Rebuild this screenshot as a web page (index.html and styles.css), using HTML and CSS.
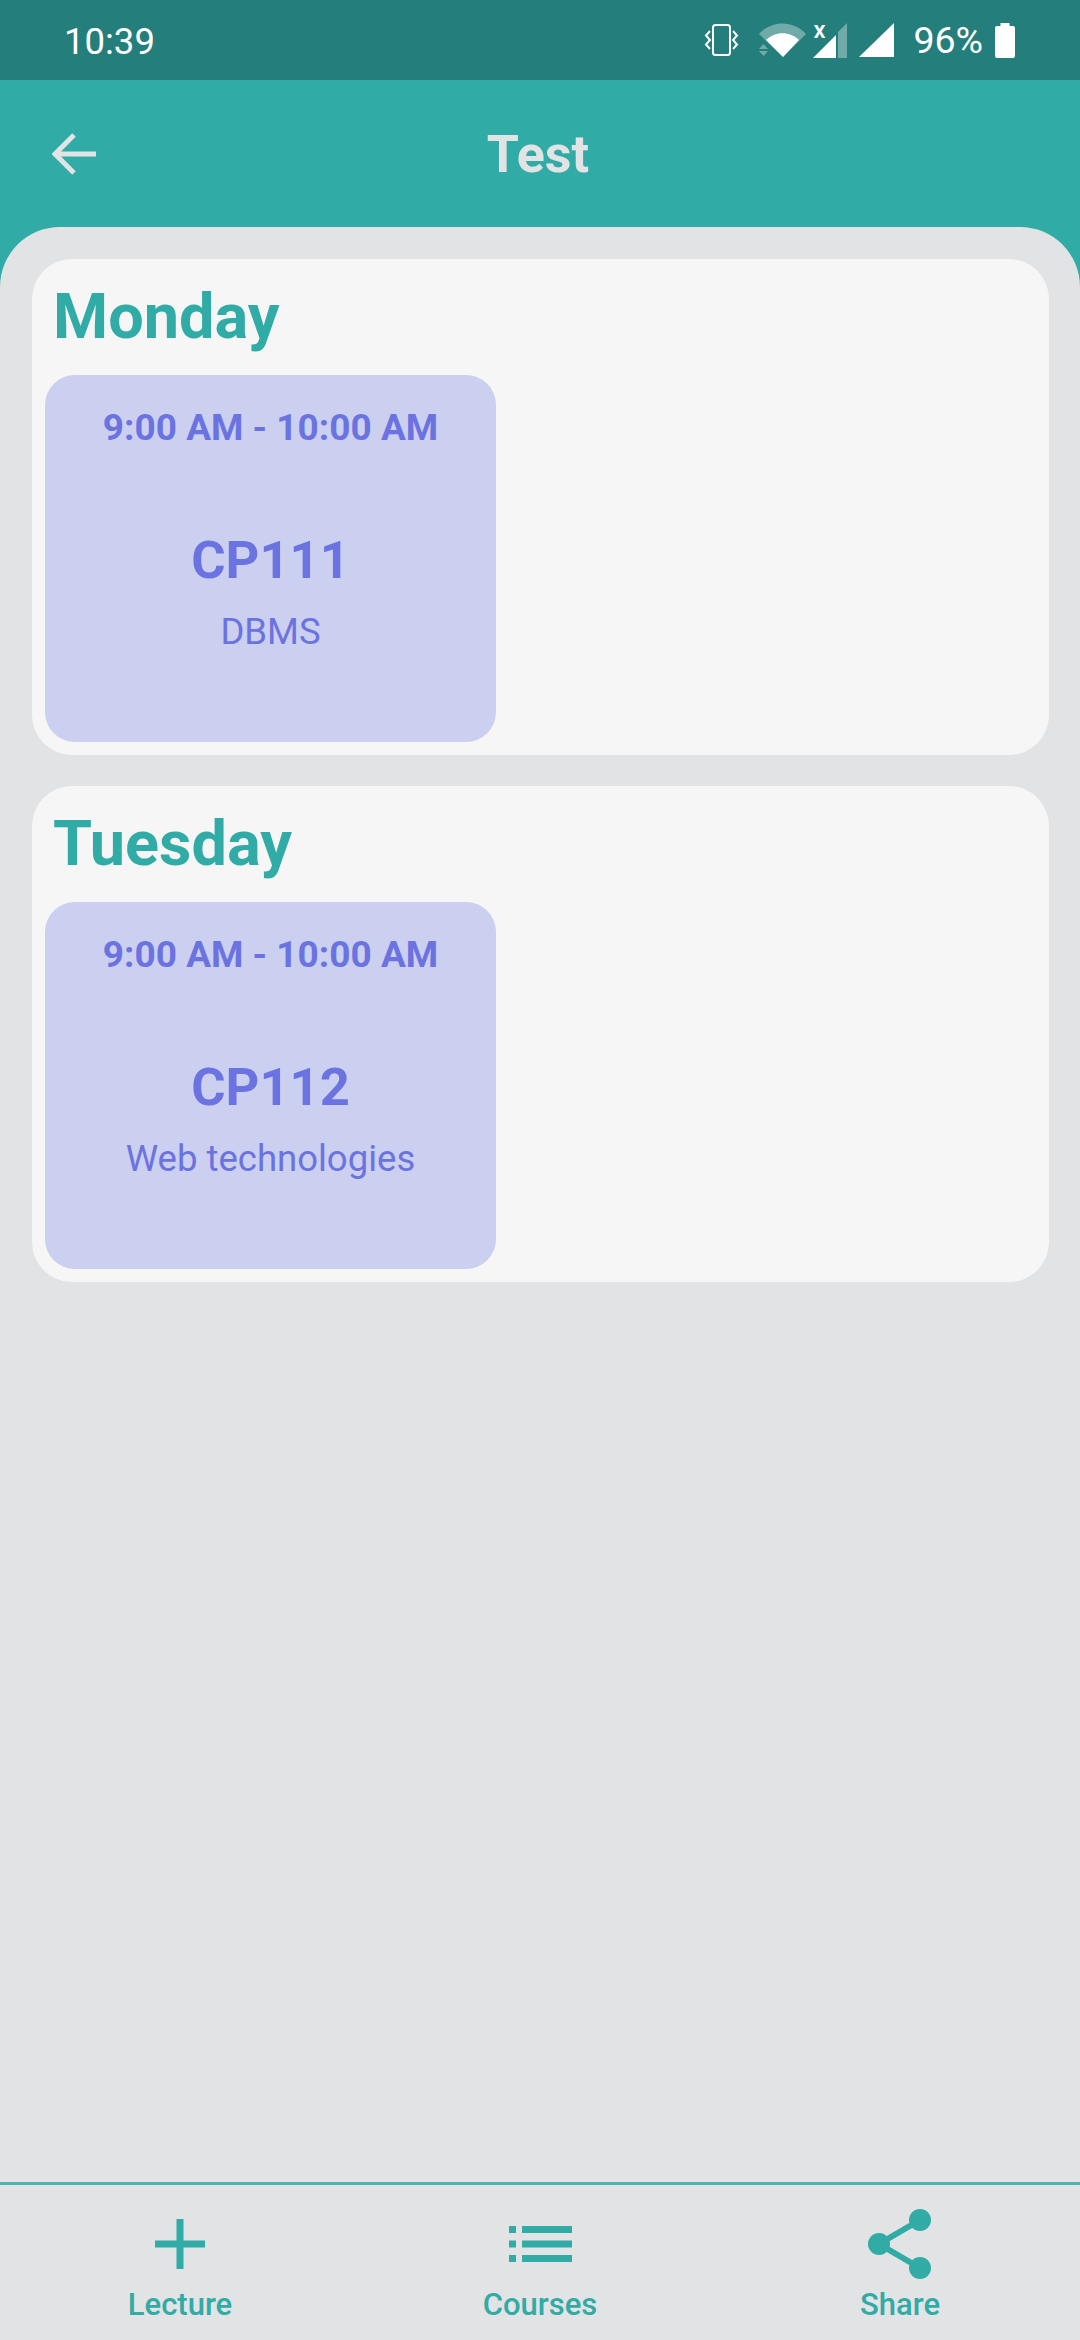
FILE: index.html
```html
<!DOCTYPE html>
<html lang="en">
	<head>
		<meta charset="UTF-8" />
		<meta name="viewport" content="width=device-width, initial-scale=1.0" />
		<title>Test</title>
		<link rel="stylesheet" href="styles.css">
	</head>
	<body>
		<div class="statusbar">
			<span class="clock">10:39</span>
			<div class="status-icons">
				<svg class="ic-vibrate" width="35" height="34" viewBox="0 0 35 34">
					<rect x="9" y="2" width="17" height="30" rx="2.500" fill="none" stroke="#fff" stroke-width="2"/>
					<path d="M6 8 L2 12.500 L6 17 L2 21.500 L6 26 M29 8 L33 12.500 L29 17 L33 21.500 L29 26" fill="none" stroke="#fff" stroke-width="2"/>
				</svg>
				<svg class="ic-wifi" width="47" height="34" viewBox="0 0 47 34">
					<path d="M0 11 C13 -3 34 -3 47 11 L24 34 Z" fill="#fff" fill-opacity="0.35"/>
					<path d="M7 17 C16 8 31 8 40 17 L24 34 Z" fill="#fff"/>
					<path d="M0 26 L4.500 21 L9 26 Z M0 28 L9 28 L4.500 33 Z" fill="#fff" fill-opacity="0.35"/>
				</svg>
				<div class="signal-x">
					<span class="x-mark">x</span>
					<svg width="34" height="35" viewBox="0 0 34 35">
						<path d="M34 0 V35 H25 V9 Z" fill="#fff" fill-opacity="0.35"/>
						<path d="M23 12 V35 H0 Z" fill="#fff"/>
					</svg>
				</div>
				<svg class="ic-signal" width="35" height="34" viewBox="0 0 35 34">
					<path d="M35 0 V34 H0 Z" fill="#fff"/>
				</svg>
				<span class="battery-pct">96%</span>
				<svg class="ic-battery" width="20" height="35" viewBox="0 0 20 35">
					<path d="M5.500 0 H14.500 V3 H18 Q20 3 20 5 V33 Q20 35 18 35 H2 Q0 35 0 33 V5 Q0 3 2 3 H5.500 Z" fill="#fff"/>
				</svg>
			</div>
		</div>
		<main class="screen">
			<header class="appbar">
				<svg class="back" width="44" height="42" viewBox="0 0 44 42">
					<path d="M44 21 H3 M22 2 L3 21 L22 40" fill="none" stroke="#e1e3e5" stroke-width="5"/>
				</svg>
				<h1>Test</h1>
			</header>
			<div class="sheet">
				<div class="days">
					<section class="day">
						<h2>Monday</h2>
						<div class="lecture">
							<div class="lecture-time">9:00 AM - 10:00 AM</div>
							<div class="lecture-code">CP111</div>
							<div class="lecture-name">DBMS</div>
						</div>
					</section>
					<section class="day">
						<h2>Tuesday</h2>
						<div class="lecture">
							<div class="lecture-time">9:00 AM - 10:00 AM</div>
							<div class="lecture-code">CP112</div>
							<div class="lecture-name">Web technologies</div>
						</div>
					</section>
				</div>
				<nav class="bottomnav">
					<div class="nav-item">
						<div class="nav-icon">
							<svg width="50" height="50" viewBox="0 0 50 50">
								<path d="M25 0 V50 M0 25 H50" stroke="#31aba6" stroke-width="7" fill="none"/>
							</svg>
						</div>
						<span>Lecture</span>
					</div>
					<div class="nav-item">
						<div class="nav-icon">
							<svg width="63" height="36" viewBox="0 0 63 36" fill="#31aba6">
								<rect x="0" y="0" width="7" height="7"/>
								<rect x="13" y="0" width="50" height="7"/>
								<rect x="0" y="14.500" width="7" height="7"/>
								<rect x="13" y="14.500" width="50" height="7"/>
								<rect x="0" y="29" width="7" height="7"/>
								<rect x="13" y="29" width="50" height="7"/>
							</svg>
						</div>
						<span>Courses</span>
					</div>
					<div class="nav-item">
						<div class="nav-icon">
							<svg width="64" height="70" viewBox="0 0 64 70">
								<path d="M52 11 L11 35 L52 59" stroke="#31aba6" stroke-width="6" fill="none"/>
								<circle cx="52" cy="11" r="11" fill="#31aba6"/>
								<circle cx="11" cy="35" r="11" fill="#31aba6"/>
								<circle cx="52" cy="59" r="11" fill="#31aba6"/>
							</svg>
						</div>
						<span>Share</span>
					</div>
				</nav>
			</div>
		</main>
	</body>
</html>
```

FILE: styles.css
```css
html,
body {
	margin: 0;
	width: 100%;
	height: 100%;
}
body {
	display: flex;
	flex-direction: column;
	height: 2340px;
	overflow: hidden;
	font-family: Roboto, "Liberation Sans", sans-serif;
	background: #31aba6;
}
.statusbar {
	flex: none;
	height: 80px;
	box-sizing: border-box;
	padding: 0 65px 0 64px;
	display: flex;
	justify-content: space-between;
	align-items: center;
	background: #247e7b;
	color: #fff;
}
.clock {
	font-size: 36.5px;
	padding-top: 2px;
}
.status-icons {
	display: flex;
	align-items: center;
}
.ic-vibrate {
	margin-right: 20px;
}
.ic-wifi {
	margin-right: 7px;
}
.signal-x {
	position: relative;
	display: flex;
	margin-right: 12px;
}
.x-mark {
	position: absolute;
	left: 0;
	top: -4px;
	font-size: 24px;
	font-weight: 500;
	line-height: 22px;
}
.battery-pct {
	font-size: 37.5px;
	margin: 0 12px 0 19px;
}
.screen {
	flex: 1;
	display: flex;
	flex-direction: column;
	min-height: 0;
}
.appbar {
	flex: none;
	height: 147px;
	position: relative;
	display: flex;
	align-items: center;
	justify-content: center;
}
.appbar h1 {
	margin: 2px 4px 0 0;
	font-size: 52px;
	font-weight: 700;
	color: #e1e3e5;
}
.back {
	position: absolute;
	left: 52px;
	top: 53px;
}
.sheet {
	flex: 1;
	display: flex;
	flex-direction: column;
	min-height: 0;
	background: #e1e3e5;
	border-radius: 60px 60px 0 0;
}
.days {
	flex: 1;
	display: flex;
	flex-direction: column;
	gap: 31px;
	padding: 32px 31px 0 32px;
}
.day {
	background: #f6f6f6;
	border-radius: 40px;
	padding: 14px 13px 13px;
}
.day h2 {
	margin: 0 0 14px 8px;
	font-size: 63px;
	line-height: 88px;
	font-weight: 700;
	color: #31aba6;
}
.lecture {
	width: 451px;
	height: 367px;
	box-sizing: border-box;
	padding-top: 30px;
	display: flex;
	flex-direction: column;
	align-items: center;
	background: #cbcff0;
	border-radius: 30px;
	color: #6b73e0;
}
.lecture-time {
	font-size: 37px;
	line-height: 46px;
	font-weight: 700;
}
.lecture-code {
	margin-top: 76px;
	font-size: 52.500px;
	line-height: 66px;
	font-weight: 700;
}
.lecture-name {
	margin-top: 17px;
	font-size: 36.500px;
	line-height: 44px;
}
.bottomnav {
	flex: none;
	height: 158px;
	box-sizing: border-box;
	display: grid;
	grid-template-columns: repeat(3, 1fr);
	border-top: 3px solid #4fb5b1;
}
.nav-item {
	display: flex;
	flex-direction: column;
	align-items: center;
	color: #31aba6;
	font-size: 31px;
	font-weight: 500;
}
.nav-icon {
	height: 70px;
	margin-top: 24px;
	display: flex;
	align-items: center;
	justify-content: center;
}
.nav-item span {
	margin-top: 8px;
	line-height: 36px;
}
```
